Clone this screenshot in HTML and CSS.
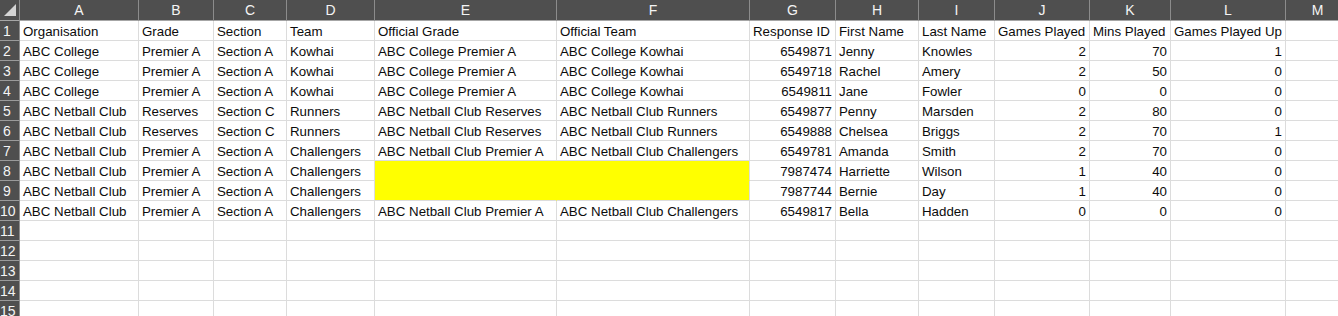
FILE: index.html
```html
<!DOCTYPE html>
<html lang="en">
<head>
    <meta charset="UTF-8">
    <meta name="viewport" content="width=device-width, initial-scale=1.0">
    <title>Player returns</title>
    <link rel="stylesheet" href="styles.css">
</head>
<body>
    <div class="sheet" id="sheet">
        <div class="corner">
            <svg viewBox="0 0 20 20"><polygon points="16 4 16 16 4 16"/></svg>
        </div>
    </div>

    <script>
  const sheet = document.getElementById('sheet');
  const letters = ['A','B','C','D','E','F','G','H','I','J','K','L','M'];
  const numeric = [6, 9, 10, 11]; // G, J, K, L hold numbers

  const rows = [
    ['Organisation','Grade','Section','Team','Official Grade','Official Team','Response ID','First Name','Last Name','Games Played','Mins Played','Games Played Up'],
    ['ABC College','Premier A','Section A','Kowhai','ABC College Premier A','ABC College Kowhai','6549871','Jenny','Knowles','2','70','1'],
    ['ABC College','Premier A','Section A','Kowhai','ABC College Premier A','ABC College Kowhai','6549718','Rachel','Amery','2','50','0'],
    ['ABC College','Premier A','Section A','Kowhai','ABC College Premier A','ABC College Kowhai','6549811','Jane','Fowler','0','0','0'],
    ['ABC Netball Club','Reserves','Section C','Runners','ABC Netball Club Reserves','ABC Netball Club Runners','6549877','Penny','Marsden','2','80','0'],
    ['ABC Netball Club','Reserves','Section C','Runners','ABC Netball Club Reserves','ABC Netball Club Runners','6549888','Chelsea','Briggs','2','70','1'],
    ['ABC Netball Club','Premier A','Section A','Challengers','ABC Netball Club Premier A','ABC Netball Club Challengers','6549781','Amanda','Smith','2','70','0'],
    ['ABC Netball Club','Premier A','Section A','Challengers','','','7987474','Harriette','Wilson','1','40','0'],
    ['ABC Netball Club','Premier A','Section A','Challengers','','','7987744','Bernie','Day','1','40','0'],
    ['ABC Netball Club','Premier A','Section A','Challengers','ABC Netball Club Premier A','ABC Netball Club Challengers','6549817','Bella','Hadden','0','0','0']
  ];

  // column letters
  letters.forEach(l => {
    const h = document.createElement('div');
    h.className = 'col-head';
    h.textContent = l;
    sheet.appendChild(h);
  });

  for (let r = 0; r < 15; r++) {
    const num = document.createElement('div');
    num.className = 'row-head';
    num.textContent = r + 1;
    sheet.appendChild(num);

    const data = rows[r] || [];
    for (let c = 0; c < 13; c++) {
      const cell = document.createElement('div');
      cell.className = 'cell';
      if (r > 0 && numeric.includes(c)) cell.classList.add('num');
      // yellow block over E8:F9
      if ((r === 7 || r === 8) && (c === 4 || c === 5)) {
        cell.classList.add('fill');
        if (c === 4) cell.classList.add('fill-right');
        if (r === 7) cell.classList.add('fill-below');
      }
      cell.textContent = data[c] || '';
      sheet.appendChild(cell);
    }
  }
</script>
</body>
</html>
```

FILE: styles.css
```css
* {
    margin: 0;
    padding: 0;
    box-sizing: border-box;
}

body {
    background: #fff;
    overflow: hidden;
    font-family: 'Liberation Sans', Arial, sans-serif;
}

.sheet {
    display: grid;
    grid-template-columns: 20px 119px 75px 73px 88px 182px 193px 86px 83px 76px 95px 81px 115px 64px;
    grid-template-rows: 21px;
    grid-auto-rows: 20px;
    width: max-content;
}

.corner {
    background: #4f4f4f;
    border-right: 1px solid #8c8c8c;
    border-bottom: 1px solid #a6a6a6;
}
.corner svg {
    display: block;
    width: 20px;
    height: 20px;
    fill: #d4d4d4;
}

.col-head {
    background: #4f4f4f;
    color: #f4f4f4;
    border-right: 1px solid #8c8c8c;
    border-bottom: 1px solid #a6a6a6;
    text-align: center;
    font-size: 14px;
    line-height: 20px;
}

.row-head {
    background: #4f4f4f;
    color: #f4f4f4;
    border-right: 1px solid #8c8c8c;
    border-bottom: 1px solid #9a9a9a;
    text-align: center;
    padding-right: 5px;
    font-size: 14px;
    line-height: 21px;
    white-space: nowrap;
}

.cell {
    border-right: 1px solid #dcdcdc;
    border-bottom: 1px solid #dcdcdc;
    padding: 0 3px;
    font-size: 13.3px;
    line-height: 21px;
    color: #0c0c0c;
    white-space: nowrap;
    overflow: hidden;
}

.cell.num {
    text-align: right;
}

.cell.fill {
    background: #ffff00;
}
.cell.fill-right {
    border-right-color: #ffff00;
}
.cell.fill-below {
    border-bottom-color: #ffff00;
}
```
